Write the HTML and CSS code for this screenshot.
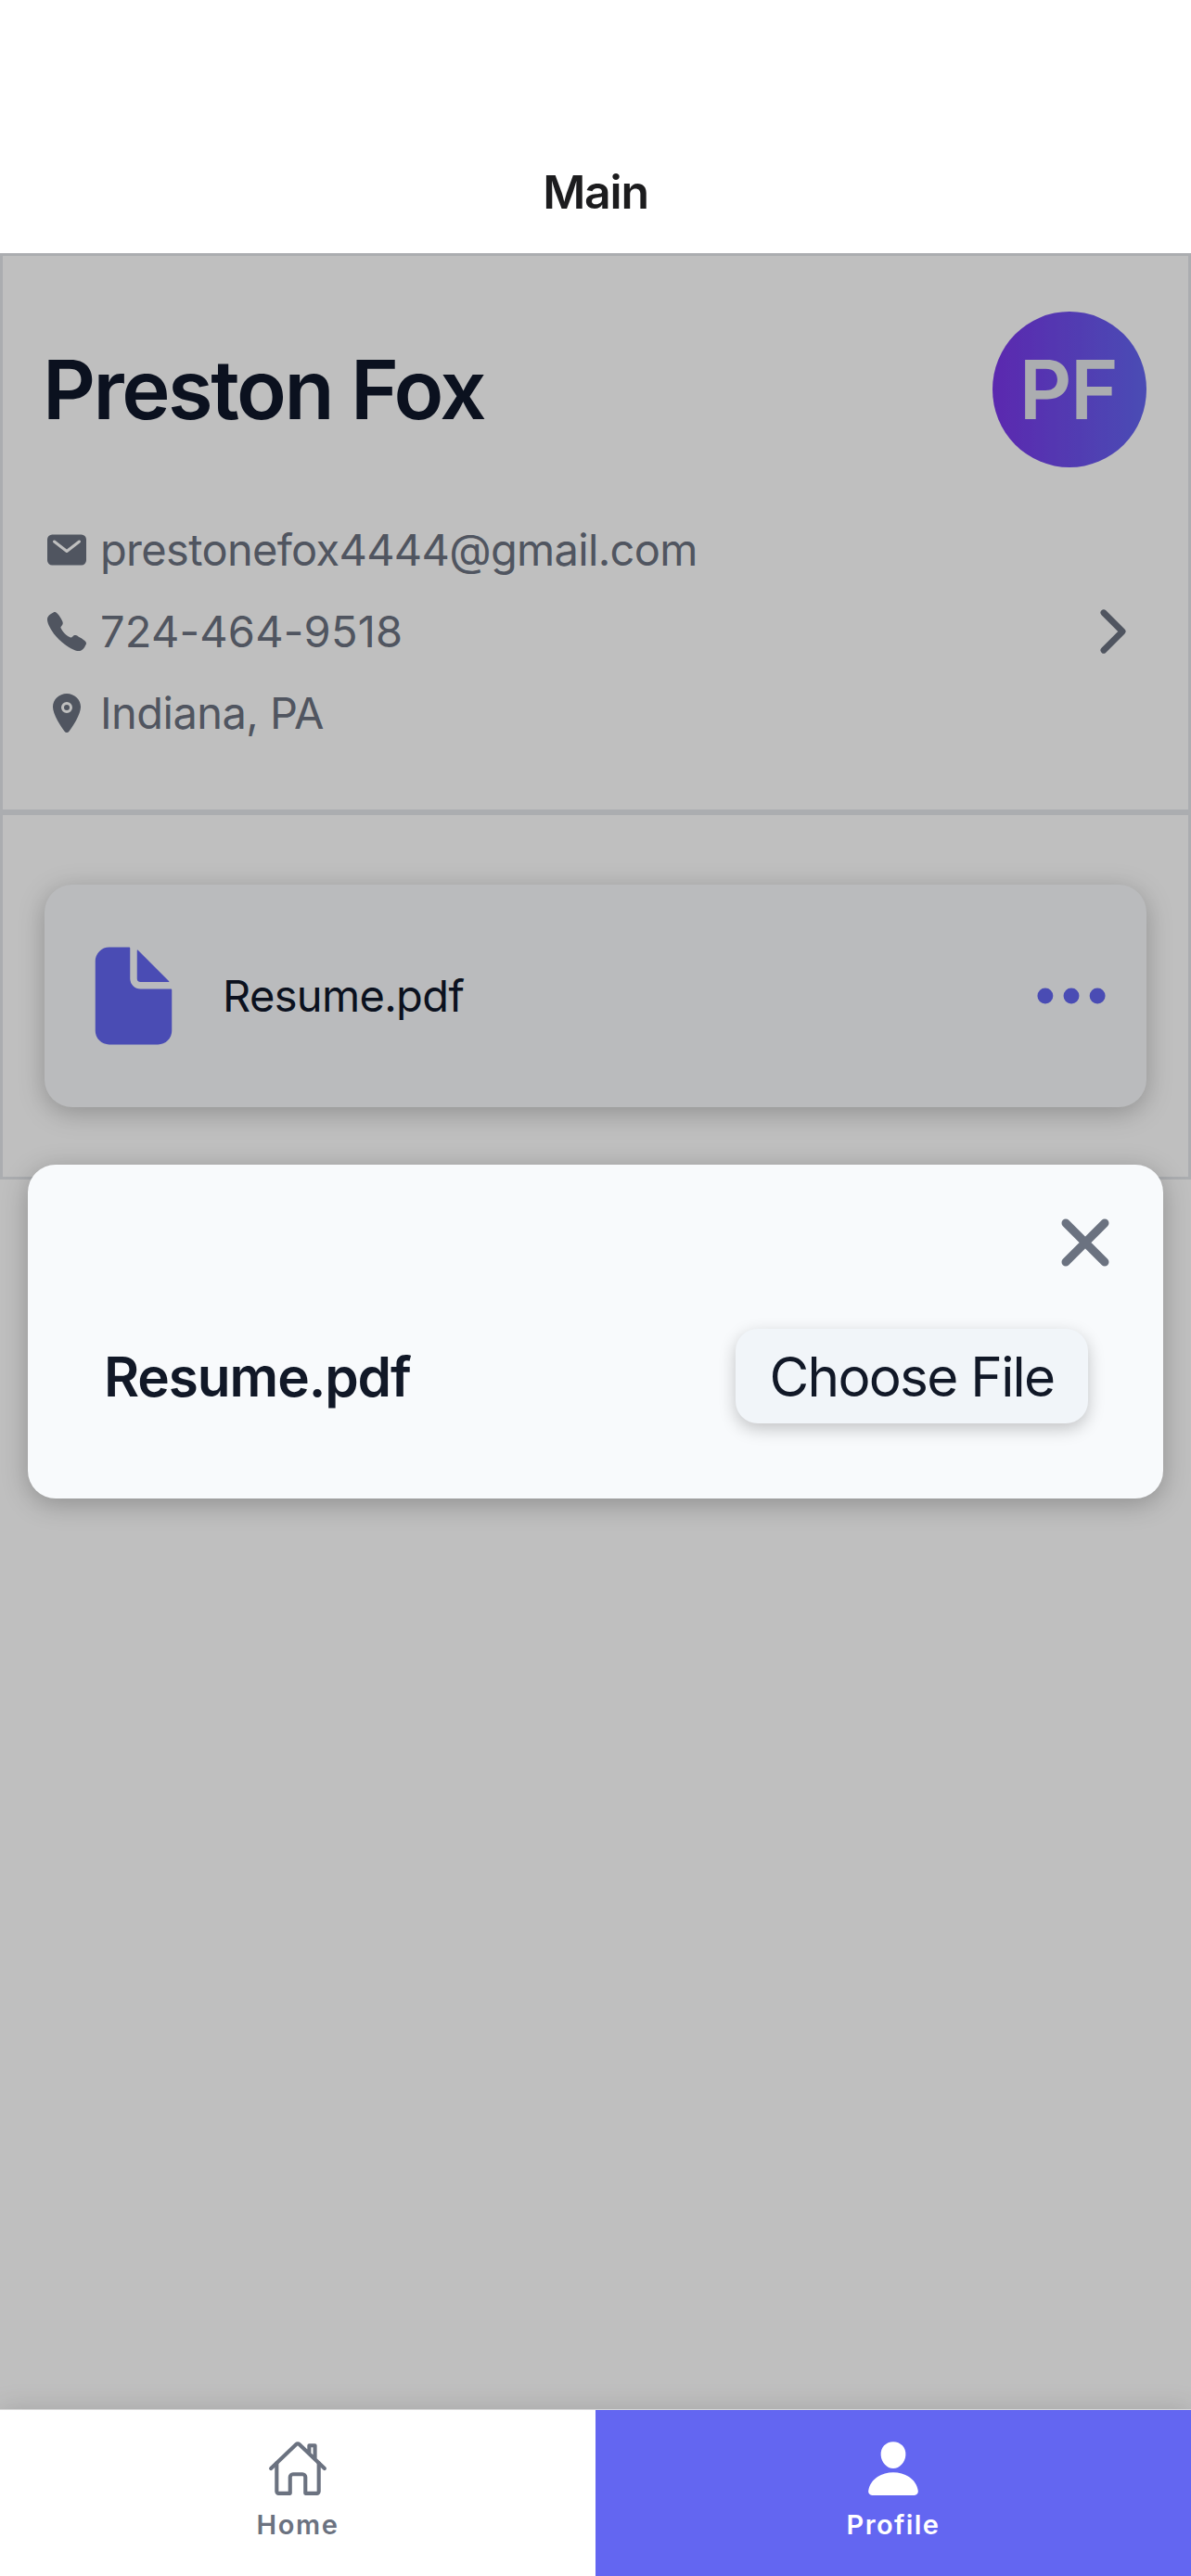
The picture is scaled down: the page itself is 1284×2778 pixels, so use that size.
FILE: index.html
```
<!DOCTYPE html>
<html lang="en">
<head>
<meta charset="utf-8">
<title>Main</title>
<link rel="stylesheet" href="styles.css">
</head>
<body>
<header class="header"><h1 class="header-title">Main</h1></header>

<main class="screen">
  <div class="profile">
    <section class="identity">
      <div class="identity-top">
        <h2 class="name">Preston Fox</h2>
        <div class="avatar"><span class="initials">PF</span></div>
      </div>
      <div class="contact">
        <ul class="contact-list">
          <li class="contact-row">
            <svg class="icon-sm" viewBox="0 0 512 512"><path d="M424 80H88a56.06 56.06 0 00-56 56v240a56.06 56.06 0 0056 56h336a56.06 56.06 0 0056-56V136a56.06 56.06 0 00-56-56zm-14.18 92.63l-144 112a16 16 0 01-19.64 0l-144-112a16 16 0 1119.64-25.26L256 251.73l134.18-104.36a16 16 0 0119.64 25.26z"/></svg>
            <span class="contact-text email">prestonefox4444@gmail.com</span>
          </li>
          <li class="contact-row">
            <svg class="icon-sm" viewBox="0 0 512 512"><path d="M391 480c-19.52 0-46.94-7.06-88-30-49.93-28-88.55-53.85-138.21-103.38C116.91 298.77 93.61 267.79 61 208.45c-36.84-67-30.56-102.12-23.54-117.13C45.82 73.38 58.16 62.65 74.11 52a176.3 176.3 0 0128.64-15.2c1-.43 1.93-.84 2.76-1.21 4.95-2.23 12.45-5.6 21.95-2 6.34 2.38 12 7.25 20.86 16 18.17 17.92 43 57.83 52.16 77.43 6.15 13.21 10.22 21.93 10.23 31.71 0 11.45-5.76 20.28-12.75 29.81-1.31 1.79-2.61 3.5-3.87 5.16-7.61 10-9.28 12.89-8.18 18.05 2.23 10.37 18.86 41.24 46.19 68.51s57.31 42.85 67.72 45.07c5.38 1.15 8.33-.59 18.65-8.47 1.48-1.13 3-2.3 4.59-3.47 10.66-7.93 19.08-13.54 30.26-13.54h.06c9.73 0 18.06 4.22 31.86 11.18 18 9.08 59.11 33.59 77.14 51.78 8.77 8.84 13.66 14.48 16.05 20.81 3.6 9.53.21 17-2 22-.37.83-.78 1.74-1.21 2.75a176.49 176.49 0 01-15.29 28.58c-10.63 15.9-21.4 28.21-39.38 36.58A67.42 67.42 0 01391 480z"/></svg>
            <span class="contact-text phone">724-464-9518</span>
          </li>
          <li class="contact-row">
            <svg class="icon-sm" viewBox="0 0 512 512"><circle cx="256" cy="192" r="32"/><path d="M256 32c-88.22 0-160 68.65-160 153 0 40.17 18.31 93.59 54.42 158.78 29 52.34 62.55 99.67 80 123.22a31.75 31.75 0 0051.22 0c17.42-23.55 51-70.88 80-123.22C397.69 278.61 416 225.19 416 185c0-84.35-71.78-153-160-153zm0 224a64 64 0 1164-64 64.07 64.07 0 01-64 64z"/></svg>
            <span class="contact-text place">Indiana, PA</span>
          </li>
        </ul>
        <svg class="chevron" viewBox="0 0 512 512"><path d="M184 112l144 144-144 144"/></svg>
      </div>
    </section>

    <section class="files">
      <article class="file-card">
        <svg class="file-icon" viewBox="0 0 512 512"><path d="M428 224H288a48 48 0 01-48-48V36a4 4 0 00-4-4h-92a64 64 0 00-64 64v320a64 64 0 0064 64h224a64 64 0 0064-64V228a4 4 0 00-4-4z"/><path d="M419.22 188.59L275.41 44.78a2 2 0 00-3.41 1.41V176a16 16 0 0016 16h129.81a2 2 0 001.41-3.41z"/></svg>
        <span class="file-name">Resume.pdf</span>
        <svg class="more" viewBox="0 0 512 512"><circle cx="256" cy="256" r="48"/><circle cx="416" cy="256" r="48"/><circle cx="96" cy="256" r="48"/></svg>
      </article>
    </section>
  </div>

  <div class="backdrop">
    <div class="dialog">
      <svg class="close" viewBox="0 0 512 512"><path d="M368 368L144 144M368 144L144 368"/></svg>
      <div class="dialog-row">
        <span class="dialog-title">Resume.pdf</span>
        <button class="choose" type="button">Choose File</button>
      </div>
    </div>
  </div>
</main>

<nav class="tabs">
  <a class="tab">
    <svg class="tab-icon outline" viewBox="0 0 512 512"><path d="M80 212v236a16 16 0 0016 16h96V328a24 24 0 0124-24h80a24 24 0 0124 24v136h96a16 16 0 0016-16V212"/><path d="M480 256L266.89 52c-5-5.28-16.69-5.34-21.78 0L32 256M400 179V64h-48v69"/></svg>
    <span class="tab-label home">Home</span>
  </a>
  <a class="tab active">
    <svg class="tab-icon" viewBox="0 0 512 512"><path d="M332.64 64.58C313.18 43.57 286 32 256 32c-30.16 0-57.43 11.5-76.8 32.38-19.58 21.11-29.12 49.8-26.88 80.78C156.76 206.28 203.27 256 256 256s99.16-49.71 103.67-110.82c2.27-30.7-7.33-59.33-27.03-80.6zM432 480H80a31 31 0 01-24.2-11.13c-6.5-7.77-9.12-18.38-7.18-29.11C57.06 392.94 83.4 353.61 124.8 326c36.78-24.51 83.37-38 131.2-38s94.42 13.5 131.2 38c41.4 27.6 67.74 66.93 76.18 113.75 1.94 10.73-.68 21.34-7.18 29.11A31 31 0 01432 480z"/></svg>
    <span class="tab-label">Profile</span>
  </a>
</nav>
</body>
</html>
```
FILE: styles.css
```
* { box-sizing: border-box; }

body {
  margin: 0;
  height: 2778px;
  display: flex;
  flex-direction: column;
  overflow: hidden;
  background: #fff;
  color: #0f172a;
  font-family: Inter, "Liberation Sans", sans-serif;
}

h1, h2, ul { margin: 0; padding: 0; }
ul { list-style: none; }
svg { display: block; flex: none; fill: currentColor; }

.header {
  flex: none;
  height: 273px;
  padding: 141px 0 0;
}
.header-title {
  text-align: center;
  font-size: 50px;
  font-weight: 560;
  line-height: 132px;
  letter-spacing: -1.2px;
  color: #1c1c1e;
}

.screen {
  position: relative;
  flex: 1;
  min-height: 0;
}

.profile { border: 3px solid #e5e7eb; }

.identity {
  padding: 60px 45px;
  border-bottom: 6px solid #e5e7eb;
}
.identity-top {
  display: flex;
  align-items: center;
  justify-content: space-between;
  margin-bottom: 45px;
}
.name {
  margin-left: -2px;
  font-size: 88.5px;
  font-weight: 600;
  line-height: 108px;
  letter-spacing: -2.5px;
}
.avatar {
  width: 166px;
  height: 168px;
  display: flex;
  align-items: center;
  justify-content: center;
  border-radius: 50%;
  background: linear-gradient(to right, #7a36ea, #6366f1);
  color: #e5e7eb;
}
.initials {
  margin-right: 3px;
  font-size: 88px;
  font-weight: 560;
  line-height: 108px;
  letter-spacing: -1.6px;
}

.contact {
  display: flex;
  align-items: center;
  justify-content: space-between;
  color: #6b7280;
}
.contact-row {
  display: flex;
  align-items: center;
  gap: 12px;
  height: 88px;
}
.icon-sm { width: 48px; height: 48px; }
.contact-text {
  font-size: 47px;
  line-height: 60px;
}
.email { letter-spacing: -0.68px; }
.phone { letter-spacing: 0.2px; }
.place { letter-spacing: -0.54px; }

.chevron {
  width: 72px;
  height: 72px;
  fill: none;
  stroke: currentColor;
  stroke-width: 48;
  stroke-linecap: round;
  stroke-linejoin: round;
}

.files { padding: 75px 45px; }
.file-card {
  display: flex;
  align-items: center;
  gap: 36px;
  height: 240px;
  padding: 0 36px;
  border-radius: 30px;
  background: #f8fafc;
  box-shadow: 0 6px 28px rgba(0, 0, 0, 0.25);
}
.file-icon { width: 120px; height: 120px; color: #6366f1; }
.file-name {
  flex: 1;
  font-size: 47px;
  line-height: 60px;
  letter-spacing: -0.65px;
}
.more { width: 90px; height: 90px; color: #6366f1; }

/* Dims the screen between the header and the tab bar */
.backdrop {
  position: absolute;
  inset: 0;
  padding: 983px 30px 0;
  background: rgba(0, 0, 0, 0.25);
}
.dialog {
  display: flex;
  flex-direction: column;
  height: 360px;
  padding: 36px 36px 81px;
  border-radius: 30px;
  background: #f8fafc;
  box-shadow: 0 6px 28px rgba(0, 0, 0, 0.25);
}
.close {
  align-self: flex-end;
  width: 96px;
  height: 96px;
  fill: none;
  stroke: #6b7280;
  stroke-width: 48;
  stroke-linecap: round;
}
.dialog-row {
  display: flex;
  align-items: center;
  justify-content: space-between;
  margin-top: 45px;
  padding: 0 45px;
  color: #111827;
}
.dialog-title {
  padding: 2px 0 0 1px;
  font-size: 58.5px;
  font-weight: 600;
  line-height: 72px;
  letter-spacing: -1.1px;
}
.choose {
  width: 380px;
  height: 102px;
  padding: 2px 0 0;
  border: 0;
  border-radius: 24px;
  background: #f1f5f9;
  color: inherit;
  font-family: inherit;
  font-size: 58.5px;
  line-height: 72px;
  letter-spacing: -1.73px;
  white-space: nowrap;
  box-shadow: 0 6px 18px rgba(0, 0, 0, 0.22);
}

.tabs {
  position: relative;
  flex: none;
  display: flex;
  height: 180px;
  border-top: 1px solid #d8d8d8;
  background: #fff;
  box-shadow: 0 0 28px rgba(0, 0, 0, 0.14);
}
.tab {
  flex: 1;
  display: flex;
  flex-direction: column;
  align-items: center;
  padding-top: 30px;
  color: #6b7280;
}
.tab.active { background: #6366f1; color: #fff; }
.tab-icon { width: 66px; height: 66px; }
.outline {
  fill: none;
  stroke: currentColor;
  stroke-width: 32;
  stroke-linecap: round;
  stroke-linejoin: round;
}
.tab-label {
  margin-top: 10px;
  font-size: 29px;
  font-weight: 560;
  line-height: 36px;
  letter-spacing: 1.4px;
}
.home { letter-spacing: 1.6px; }
```
